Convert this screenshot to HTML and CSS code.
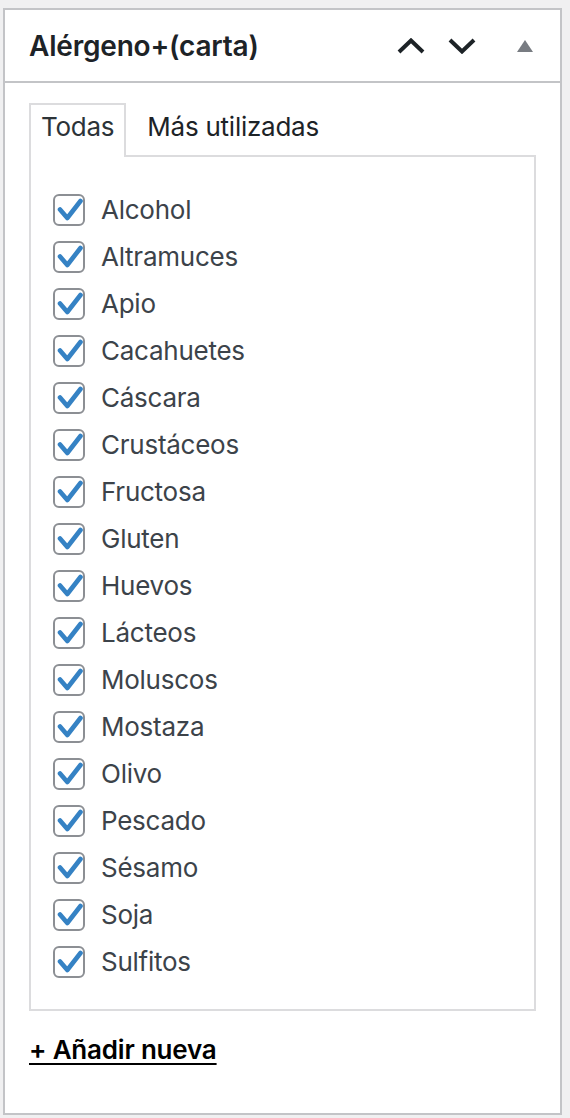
FILE: index.html
```html
<!DOCTYPE html>
<html lang="es">
<head>
    <meta charset="UTF-8">
    <meta name="viewport" content="width=device-width, initial-scale=1.0">
    <title>Alérgeno+(carta)</title>
    <link rel="stylesheet" href="styles.css">
</head>
<body>
    <svg class="sprites" width="0" height="0" aria-hidden="true">
        <symbol id="check" viewBox="0 0 28 28">
            <path d="M5 13.5 L12.3 22 L25.5 5" fill="none" stroke="#3582c4" stroke-width="4.6" stroke-linecap="round" stroke-linejoin="round"/>
        </symbol>
    </svg>

    <div class="postbox">
        <div class="postbox-header">
            <h2 class="hndle">Alérgeno+(carta)</h2>
            <div class="handle-actions">
                <button class="handle-btn order-higher" aria-label="Subir">
                    <svg width="30" height="16" viewBox="0 0 30 16"><path d="M2 14 L14 2.5 L26 14" fill="none" stroke="#1d2327" stroke-width="4"/></svg>
                </button>
                <button class="handle-btn order-lower" aria-label="Bajar">
                    <svg width="30" height="16" viewBox="0 0 30 16"><path d="M2 2 L14 13.5 L26 2" fill="none" stroke="#1d2327" stroke-width="4"/></svg>
                </button>
                <button class="handle-btn toggle" aria-label="Cerrar">
                    <svg width="16" height="12" viewBox="0 0 16 12"><path d="M0 12 L8 0 L16 12 Z" fill="#787c82"/></svg>
                </button>
            </div>
        </div>

        <div class="inside">
            <!-- pestañas -->
            <ul class="category-tabs">
                <li class="tabs">Todas</li>
                <li>Más utilizadas</li>
            </ul>

            <div class="tabs-panel">
                <ul class="checklist">
                    <li><label><span class="cb"><svg><use href="#check"/></svg></span>Alcohol</label></li>
                    <li><label><span class="cb"><svg><use href="#check"/></svg></span>Altramuces</label></li>
                    <li><label><span class="cb"><svg><use href="#check"/></svg></span>Apio</label></li>
                    <li><label><span class="cb"><svg><use href="#check"/></svg></span>Cacahuetes</label></li>
                    <li><label><span class="cb"><svg><use href="#check"/></svg></span>Cáscara</label></li>
                    <li><label><span class="cb"><svg><use href="#check"/></svg></span>Crustáceos</label></li>
                    <li><label><span class="cb"><svg><use href="#check"/></svg></span>Fructosa</label></li>
                    <li><label><span class="cb"><svg><use href="#check"/></svg></span>Gluten</label></li>
                    <li><label><span class="cb"><svg><use href="#check"/></svg></span>Huevos</label></li>
                    <li><label><span class="cb"><svg><use href="#check"/></svg></span>Lácteos</label></li>
                    <li><label><span class="cb"><svg><use href="#check"/></svg></span>Moluscos</label></li>
                    <li><label><span class="cb"><svg><use href="#check"/></svg></span>Mostaza</label></li>
                    <li><label><span class="cb"><svg><use href="#check"/></svg></span>Olivo</label></li>
                    <li><label><span class="cb"><svg><use href="#check"/></svg></span>Pescado</label></li>
                    <li><label><span class="cb"><svg><use href="#check"/></svg></span>Sésamo</label></li>
                    <li><label><span class="cb"><svg><use href="#check"/></svg></span>Soja</label></li>
                    <li><label><span class="cb"><svg><use href="#check"/></svg></span>Sulfitos</label></li>
                </ul>
            </div>

            <a href="#" class="add-new">+ Añadir nueva</a>
        </div>
    </div>
</body>
</html>
```

FILE: styles.css
```css
/* metabox de taxonomía */
* {
    box-sizing: border-box;
}

body {
    margin: 0;
    padding: 8px 0 0 3px;
    background-color: #f0f0f1;
    font-family: Inter, "Noto Sans", sans-serif;
    color: #3c434a;
}

.sprites {
    position: absolute;
}

.postbox {
    width: 559px;
    height: 1107px;
    background-color: #fff;
    border: 2px solid #c3c4c7;
}

.postbox-header {
    display: flex;
    align-items: center;
    justify-content: space-between;
    height: 73px;
    border-bottom: 2px solid #c3c4c7;
}

.hndle {
    margin: 0;
    padding-left: 24px;
    font-size: 28px;
    font-weight: 600;
    letter-spacing: -0.2px;
    color: #1d2327;
}

.handle-actions {
    display: flex;
    align-items: center;
    height: 100%;
}

.handle-btn {
    display: flex;
    align-items: center;
    justify-content: center;
    width: 51px;
    height: 100%;
    padding: 0;
    border: 0;
    background: none;
}

.handle-btn.order-lower {
    margin-right: 2px;
}

.handle-btn.toggle {
    width: 70px;
}

.inside {
    padding: 20px 24px;
}

.category-tabs {
    display: flex;
    gap: 9px;
    margin: 0;
    padding: 0;
    list-style: none;
    font-size: 26px;
    line-height: 36px;
    letter-spacing: -0.25px;
    color: #1d2327;
}

.category-tabs li {
    padding: 4px 10px 10px;
    border: 2px solid transparent;
    border-bottom: 0;
}

.category-tabs li.tabs {
    position: relative;
    margin-bottom: -2px;
    padding-bottom: 12px;
    border-color: #dcdcde;
    background-color: #fff;
    color: #2c3338;
}

.tabs-panel {
    width: 507px;
    padding: 29px 22px 24px;
    border: 2px solid #dcdcde;
}

.checklist {
    margin: 0;
    padding: 0;
    list-style: none;
}

.checklist label {
    display: flex;
    align-items: center;
    gap: 16px;
    height: 47px;
    font-size: 26px;
    letter-spacing: -0.25px;
}

.cb {
    display: block;
    flex: none;
    width: 32px;
    height: 32px;
    border: 2px solid #8c8f94;
    border-radius: 6px;
}

.cb svg {
    display: block;
    width: 28px;
    height: 28px;
}

.add-new {
    display: inline-block;
    margin-top: 23px;
    font-size: 26px;
    font-weight: 600;
    letter-spacing: -0.2px;
    color: #000;
    text-decoration-thickness: 2px;
    text-underline-offset: 4px;
}
```
